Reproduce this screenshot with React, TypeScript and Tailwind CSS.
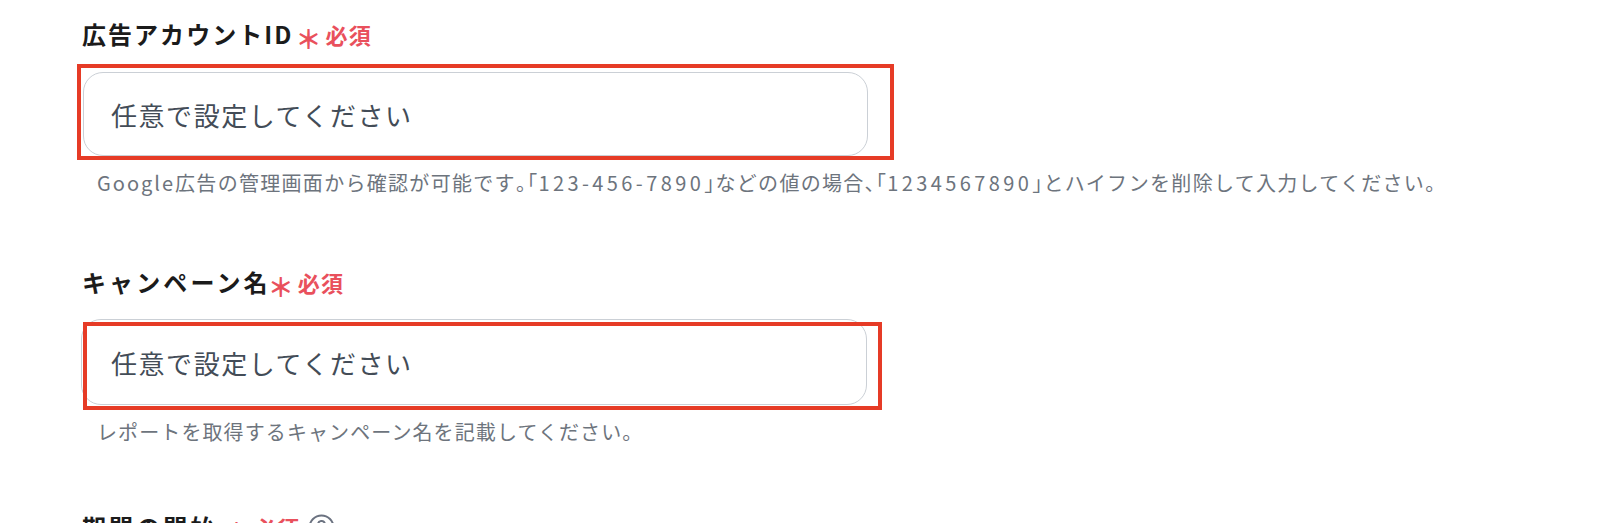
import React from "react";

const font = { fontFamily: '"Noto Sans CJK JP", "Noto Sans", sans-serif' };

function Required({ gap }: { gap: string }) {
  return (
    <span className={`flex items-center ${gap}`}>
      <span className="text-[26px] leading-none font-bold text-[#e9505c] translate-y-[4px]">＊</span>
      <span className="ml-[4px] text-[22px] font-bold text-[#e9505c] tracking-[0.06em]">必須</span>
    </span>
  );
}

const H = ({ children }: { children: React.ReactNode }) => (
  <span className="[font-feature-settings:'halt']">{children}</span>
);
const D = ({ children }: { children: React.ReactNode }) => (
  <span className="tracking-[0.17em]">{children}</span>
);

export default function App() {
  return (
    <div className="w-[1600px] h-[523px] overflow-hidden bg-white pl-[82px] pt-[19px]" style={font}>
      {/* Field 1 */}
      <div className="flex items-center h-[30px]">
        <span className="text-[24px] font-bold text-[#1b1b1b] tracking-[0.085em]">広告アカウントID</span>
        <Required gap="ml-[2px]" />
      </div>
      <div className="relative mt-[23px] ml-[1px] w-[785px] h-[84px]">
        <div className="w-full h-full rounded-[20px] border-[1.5px] border-[#cbd0d6] bg-white flex items-center pl-[27px]">
          <span className="text-[26px] text-[#434c57] tracking-[0.06em]">任意で設定してください</span>
        </div>
        <div className="absolute left-[-6px] top-[-8px] w-[817px] h-[96px] border-[4px] border-[#e63b26]" />
      </div>
      <div className="mt-[14px] pl-[15px] h-[26px] flex items-center text-[20px] text-[#6d747d] tracking-[0.065em] whitespace-nowrap">
        <span>
          <span className="tracking-[0.1em]">Google</span>広告の管理画面から確認が可能です<H>。</H>「<D>123-456-7890</D><H>」</H>などの値の場合<H>、</H>「<D>1234567890</D><H>」</H>とハイフンを削除して入力してください。
        </span>
      </div>

      {/* Field 2 */}
      <div className="mt-[71px] flex items-center h-[30px]">
        <span className="text-[24px] font-bold text-[#1b1b1b] tracking-[0.13em]">キャンペーン名</span>
        <Required gap="ml-[-3px]" />
      </div>
      <div className="relative mt-[22px] ml-[-1px] w-[786px] h-[86px]">
        <div className="w-full h-full rounded-[20px] border-[1.5px] border-[#cbd0d6] bg-white flex items-center pl-[29px]">
          <span className="text-[26px] text-[#434c57] tracking-[0.06em]">任意で設定してください</span>
        </div>
        <div className="absolute left-[2px] top-[3px] w-[799px] h-[88px] border-[4px] border-[#e63b26]" />
      </div>
      <div className="mt-[14px] pl-[15px] h-[26px] flex items-center text-[20px] text-[#6d747d] tracking-[0.055em] whitespace-nowrap">
        レポートを取得するキャンペーン名を記載してください。
      </div>

      {/* Field 3 */}
      <div className="mt-[67px] flex items-center h-[30px]">
        <span className="text-[24px] font-bold text-[#1b1b1b] tracking-[0.13em]">期間の開始</span>
        <Required gap="ml-[6px]" />
        <svg className="ml-[8px]" width="27" height="27" viewBox="0 0 27 27" fill="none">
          <circle cx="13.5" cy="13.5" r="12" stroke="#6b7280" strokeWidth="2" />
          <path d="M10 10.5a3.5 3.5 0 1 1 5 3.2c-1 .5-1.5 1.2-1.5 2.3" stroke="#6b7280" strokeWidth="2" strokeLinecap="round" />
          <circle cx="13.5" cy="19.5" r="1.2" fill="#6b7280" />
        </svg>
      </div>
    </div>
  );
}
